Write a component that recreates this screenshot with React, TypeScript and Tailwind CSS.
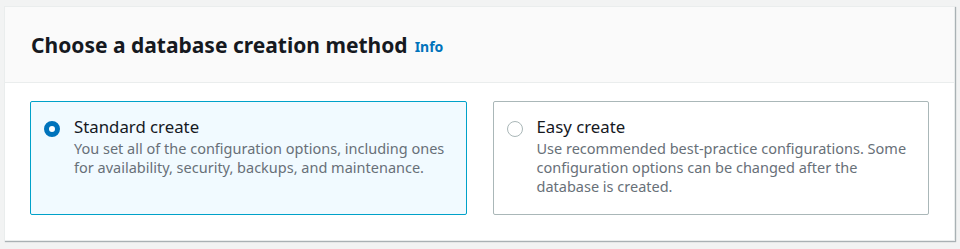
import React from "react";

function Radio({ checked }: { checked: boolean }) {
  return checked ? (
    <span className="mt-[4px] box-border block h-[16px] w-[16px] shrink-0 rounded-full border-[5px] border-[#0073bb] bg-white" />
  ) : (
    <span className="mt-[4px] box-border block h-[16px] w-[16px] shrink-0 rounded-full border-[1px] border-[#aab7b8] bg-white" />
  );
}

function Option({
  checked,
  title,
  desc,
}: {
  checked: boolean;
  title: string;
  desc: string;
}) {
  return (
    <div
      className={
        checked
          ? "flex h-[114px] gap-[14px] rounded-[2px] border border-[#00a1c9] bg-[#f1faff] pl-[13px] pr-[14px] pt-[15px]"
          : "flex h-[114px] gap-[14px] rounded-[2px] border border-[#aab7b8] bg-white pl-[13px] pr-[14px] pt-[15px]"
      }
    >
      <Radio checked={checked} />
      <div className="flex flex-col">
        <div className="text-[16.8px] leading-[20px] text-[#16191f]">{title}</div>
        <div className="mt-[2px] text-[14.5px] leading-[19px] text-[#687078]">{desc}</div>
      </div>
    </div>
  );
}

export default function App() {
  return (
    <div
      className="min-h-[249px] w-[960px] bg-[#f2f3f3] pt-[6px] pl-[4px] pr-[4px] pb-[8px]"
      style={{ fontFamily: '"Noto Sans", "Open Sans", Arial, sans-serif' }}
    >
      <div className="w-[951px] border border-[#eaeded] bg-white shadow-[1px_1px_1px_0_rgba(0,28,36,0.3)]">
        <div className="flex h-[76px] items-center border-b border-[#eaeded] bg-[#fafafa] pl-[26px]">
          <h2 className="text-[21px] font-bold leading-[24px] text-[#16191f]">
            Choose a database creation method
          </h2>
          <span className="ml-[7px] mt-[3px] text-[14px] font-bold text-[#0073bb]">Info</span>
        </div>
        <div className="grid grid-cols-2 gap-[26px] px-[25px] pt-[18px] pb-[25px]">
          <Option
            checked
            title="Standard create"
            desc="You set all of the configuration options, including ones for availability, security, backups, and maintenance."
          />
          <Option
            checked={false}
            title="Easy create"
            desc="Use recommended best-practice configurations. Some configuration options can be changed after the database is created."
          />
        </div>
      </div>
    </div>
  );
}
